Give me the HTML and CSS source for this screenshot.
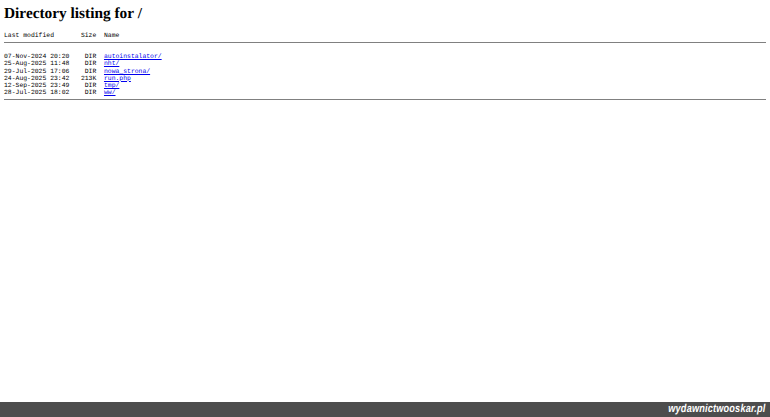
FILE: index.html
```html
<!DOCTYPE html>
<html lang="en">
<head>
    <meta charset="UTF-8">
    <title>Directory listing for /</title>
    <link rel="stylesheet" href="styles.css">
</head>
<body>
    <main class="listing">
        <h1>Directory listing for /</h1>
<pre class="header">Last modified       Size  Name</pre>
        <hr>
<pre class="rows">07-Nov-2024 20:20    DIR  <a href="autoinstalator/">autoinstalator/</a>
25-Aug-2025 11:48    DIR  <a href="nht/">nht/</a>
29-Jul-2025 17:06    DIR  <a href="nowa_strona/">nowa_strona/</a>
24-Aug-2025 23:42   213K  <a href="run.php">run.php</a>
12-Sep-2025 23:49    DIR  <a href="tmp/">tmp/</a>
28-Jul-2025 18:02    DIR  <a href="ww/">ww/</a></pre>
        <hr>
    </main>
    <footer class="footer"><span class="brand">wydawnictwooskar.pl</span></footer>
</body>
</html>
```

FILE: styles.css
```css
html, body {
    height: 100%;
}

body {
    margin: 0;
    display: flex;
    flex-direction: column;
    background: #fff;
    color: #000;
    font-family: "Liberation Serif", serif;
    text-rendering: geometricPrecision;
}

.listing {
    flex: 1;
    padding: 5px 4px 0;
}

h1 {
    margin: 0 0 9px;
    font-size: 15.35px;
    line-height: 18px;
}

pre {
    margin: 0;
    font-family: "Liberation Mono", monospace;
    font-size: 6.42px;
    line-height: 7.2px;
}

.rows {
    margin: 10px 0 3px;
}

hr {
    margin: 3px 0 0;
    border: 0;
    border-top: 1px solid #808080;
}

a {
    color: #00e;
    text-underline-offset: 1px;
}

.footer {
    height: 15px;
    padding-right: 5px;
    background: #4d4d4d;
    color: #fff;
    font-family: "Liberation Sans", sans-serif;
    font-size: 11.5px;
    font-style: italic;
    font-weight: bold;
    letter-spacing: 0.2px;
    line-height: 15px;
    text-align: right;
}

.brand {
    display: inline-block;
    transform: scaleX(0.8);
    transform-origin: right center;
}
```
